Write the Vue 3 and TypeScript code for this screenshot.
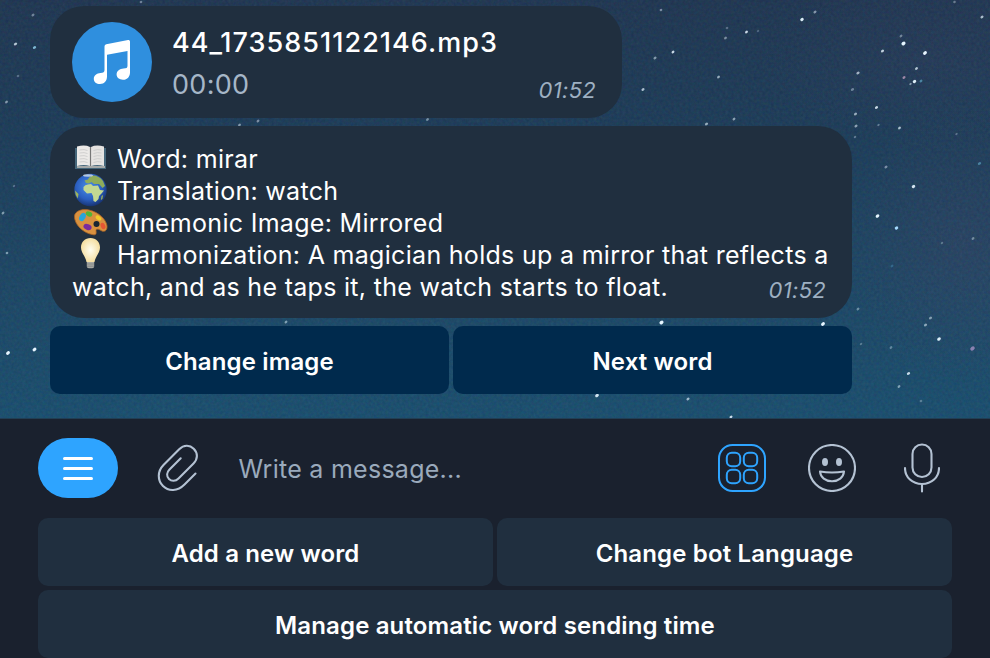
<script setup lang="ts">
interface Star { x: number; y: number; r: number; o: number; c?: string }

const stars: Star[] = [
  { x: 673, y: 52, r: 1.4, o: 0.85 }, { x: 718.5, y: 77, r: 1.4, o: 0.6 }, { x: 746.5, y: 32, r: 1.4, o: 0.85 },
  { x: 725.5, y: 38, r: 1.4, o: 0.45 }, { x: 727, y: 28, r: 1.3, o: 0.3 }, { x: 758, y: 31, r: 1.2, o: 0.25 },
  { x: 802, y: 19.5, r: 1.7, o: 0.95 }, { x: 815, y: 12, r: 1.5, o: 0.5 }, { x: 903.5, y: 43.5, r: 2, o: 1 },
  { x: 901, y: 36, r: 1.4, o: 0.4 }, { x: 925, y: 53, r: 1.9, o: 1 }, { x: 882.5, y: 51, r: 1.5, o: 0.8 },
  { x: 858, y: 73, r: 1.6, o: 0.65 }, { x: 852.5, y: 89.5, r: 1.6, o: 0.4 }, { x: 916.5, y: 68.5, r: 1.4, o: 0.75 },
  { x: 904, y: 77.5, r: 1.5, o: 0.6, c: '#efb9dc' }, { x: 914.5, y: 81.5, r: 1.7, o: 0.95 }, { x: 921, y: 81, r: 1.4, o: 0.5, c: '#76c9ed' },
  { x: 910.5, y: 84, r: 1.2, o: 0.5 }, { x: 876.5, y: 107.5, r: 1.5, o: 0.85 }, { x: 855.5, y: 114, r: 1.5, o: 0.6 },
  { x: 856, y: 126, r: 1.5, o: 0.55 }, { x: 878.5, y: 125, r: 1.2, o: 0.35 }, { x: 899.5, y: 128, r: 1.4, o: 0.7 },
  { x: 855, y: 137, r: 1.2, o: 0.35 }, { x: 886, y: 167, r: 1.5, o: 0.45 }, { x: 913.5, y: 186.5, r: 1.7, o: 0.9 },
  { x: 979.5, y: 163.5, r: 1.6, o: 0.5, c: '#6fc1e4' }, { x: 982, y: 17, r: 1.5, o: 0.7 }, { x: 954.5, y: 2, r: 1.3, o: 0.35 },
  { x: 956.5, y: 134, r: 1.2, o: 0.3 }, { x: 734, y: 119, r: 1.4, o: 0.55 }, { x: 706.5, y: 124, r: 1.5, o: 0.6 },
  { x: 661, y: 10, r: 1.3, o: 0.45 }, { x: 655, y: 58, r: 1.5, o: 0.5 }, { x: 643, y: 89.5, r: 1.5, o: 0.7 },
  { x: 877.5, y: 216, r: 1.8, o: 1 }, { x: 896.5, y: 228, r: 1.7, o: 1, c: '#a5dbff' }, { x: 973, y: 238.5, r: 1.4, o: 0.4 },
  { x: 942, y: 243, r: 1.2, o: 0.3 }, { x: 892, y: 266, r: 1.4, o: 0.3, c: '#55b2e4' }, { x: 858, y: 309, r: 1.4, o: 0.4 },
  { x: 930.5, y: 318, r: 1.5, o: 0.5 }, { x: 925.5, y: 325, r: 1.5, o: 0.55 }, { x: 939, y: 339, r: 1.8, o: 0.95 },
  { x: 972.5, y: 348.5, r: 2.2, o: 0.7, c: '#b798cf' }, { x: 908.5, y: 373.5, r: 1.6, o: 0.85 }, { x: 899, y: 386.5, r: 1.4, o: 0.5 },
  { x: 891, y: 347.5, r: 1.4, o: 0.35 }, { x: 861, y: 344, r: 1.2, o: 0.3 }, { x: 921, y: 401, r: 1.3, o: 0.3 },
  { x: 823, y: 324, r: 1.9, o: 1 }, { x: 661.5, y: 322.5, r: 2, o: 1 }, { x: 597, y: 395.5, r: 1.8, o: 0.9 },
  { x: 688, y: 399, r: 1.5, o: 0.65 }, { x: 731, y: 417, r: 1.4, o: 0.85 }, { x: 8, y: 353, r: 1.9, o: 1 },
  { x: 34.5, y: 349.5, r: 1.9, o: 1 }, { x: 286, y: 322, r: 1.4, o: 0.5 }, { x: 15.5, y: 44, r: 1.6, o: 0.75 },
  { x: 34.5, y: 47.5, r: 1.6, o: 0.75, c: '#9ee0ff' }, { x: 33, y: 15, r: 1.5, o: 0.4 }, { x: 6.5, y: 102, r: 1.4, o: 0.5 },
  { x: 18, y: 76, r: 1.3, o: 0.3 }, { x: 141, y: 2, r: 1.3, o: 0.4 }, { x: 258, y: 121, r: 1.4, o: 0.45 },
  { x: 239.5, y: 125, r: 1.4, o: 0.5 }, { x: 427.5, y: 119.5, r: 1.4, o: 0.45 }, { x: 3, y: 213, r: 1.4, o: 0.5 },
  { x: 7, y: 253, r: 1.3, o: 0.5 }, { x: 14, y: 186, r: 1.2, o: 0.3 },
]
</script>

<template>
  <main class="app">
    <section class="chat">
      <svg class="sky" viewBox="0 0 990 420" aria-hidden="true">
        <defs>
          <filter id="grain" x="0" y="0" width="100%" height="100%" color-interpolation-filters="sRGB">
            <feTurbulence type="fractalNoise" baseFrequency="0.35" numOctaves="2" seed="8" />
            <feColorMatrix values="1 0 0 0 0  0 1 0 0 0  0 0 1 0 0  0 0 0 0 1" />
          </filter>
          <linearGradient id="night" x1="0" y1="0" x2="0" y2="1">
            <stop offset="0" stop-color="#1b3350" />
            <stop offset=".3" stop-color="#183957" />
            <stop offset=".65" stop-color="#184363" />
            <stop offset="1" stop-color="#154c6e" />
          </linearGradient>
          <radialGradient id="violet"><stop stop-color="#3a3f62" stop-opacity=".35" /><stop offset="1" stop-color="#3a3f62" stop-opacity="0" /></radialGradient>
        </defs>
        <rect width="990" height="420" fill="url(#night)" />
        <ellipse cx="965" cy="245" rx="120" ry="140" fill="url(#violet)" />
        <ellipse cx="930" cy="60" rx="170" ry="90" fill="url(#violet)" opacity=".6" />
        <rect width="990" height="420" filter="url(#grain)" opacity=".08" />
        <ellipse
          v-for="(s, i) in stars" :key="i" :cx="s.x" :cy="s.y" :rx="s.r * 1.1" :ry="s.r * 0.85"
          :fill="s.c ?? '#e6f5ff'" :opacity="s.o" :transform="`rotate(-35 ${s.x} ${s.y})`"
        />
      </svg>

      <div class="messages">
        <article class="bubble audio">
          <svg class="note" viewBox="0 0 80 80" aria-hidden="true">
            <circle cx="40" cy="40" r="40" fill="#2f8fde" />
            <path d="M32.500 24.400Q32.500 22.600 34.300 22.200L56 18Q58 17.600 58 19.500V50.500C58 54.500 55.500 57.800 51 57.800C47.200 57.800 44.600 55.700 44.600 52.600C44.600 49 48 46.800 51.500 46.600C54.500 46.500 55.500 45.900 55.500 43.800V28.900L35 32.800V54.500C35 58.800 32.500 62 28 62C24.500 62 21.800 59.800 21.800 56.900C21.800 53.200 25 51.200 28.400 51C31.500 50.800 32.500 50.100 32.500 48Z" fill="#fff" />
          </svg>
          <div class="track">
            <span class="file">44_1735851122146.mp3</span>
            <span class="elapsed">00:00</span>
          </div>
          <time class="time">01:52</time>
        </article>

        <article class="bubble card">
          <p class="line">
            <svg class="emoji" viewBox="0 0 36 32" aria-hidden="true">
              <path d="M2 4h31v21H2z" fill="#46677b" /><path d="M4 22h28v2H4z" fill="#a5a9a9" />
              <path d="M4 2.500Q12 .5 17 3V22Q11 20 4 22z" fill="#eceae8" /><path d="M18 3Q23 .5 31 2.500V22Q24 20 18 22z" fill="#e5e3e1" />
              <path d="M17.500 3v19" stroke="#777" stroke-width="1.200" />
              <path d="M6.500 6q5-1 8 .5M6.500 9q5-1 8 .5M6.500 12q5-1 8 .5M6.500 15q5-1 8 .5M6.500 18q5-1 8 .5M20.500 6.500q4-1.500 8-.5M20.500 9.500q4-1.500 8-.5M20.500 12.500q4-1.500 8-.5M20.500 15.500q4-1.500 8-.5M20.500 18.500q4-1.500 8-.5" fill="none" stroke="#c8c8c8" stroke-width=".8" />
            </svg><span>Word: mirar</span>
          </p>
          <p class="line">
            <svg class="emoji" viewBox="0 0 36 32" aria-hidden="true">
              <defs><radialGradient id="sea" cx=".45" cy=".4" r=".6"><stop stop-color="#4b90e8" /><stop offset=".65" stop-color="#2b5fc0" /><stop offset="1" stop-color="#183575" /></radialGradient></defs>
              <circle cx="17.500" cy="14" r="16.200" fill="url(#sea)" />
              <path d="M10.500 11Q12 8.500 15 8.500L18 8 20 10 25 9.500 27 14 31 14.500 28.500 17.500 26 20 25.500 23 22.500 26 20.500 25 20 20 18.500 17 14 17.500 10.500 14Z" fill="#c3d892" />
              <path d="M13 7L11.500 4.500 15 3.500 16 1.500 20-.5Q26-.5 30 5L32 10 29.500 12 26 8 21 8 18.500 6 16 7.500Z" fill="#8fac5a" />
              <path d="M2 14.500L5.500 18 4.800 22.500Q2 19 2 14.500Z" fill="#9eb45c" /><path d="M28.500 20l1.500-1-.6 4-1.500 1z" fill="#9eb45c" />
              <ellipse cx="15" cy="-.5" rx="5" ry="1.200" fill="#eef3ed" opacity=".7" />
            </svg><span>Translation: watch</span>
          </p>
          <p class="line">
            <svg class="emoji" viewBox="0 0 36 32" aria-hidden="true">
              <path d="M1.500 8C2 3 9 .5 16 2C26 4 33.500 12 34 18C34.500 23 31 24.500 28 22.500C25.500 21 23 20.500 23 22.500C23.500 26.500 23 27.500 19 26.500C10 25 1 16 1.500 8Z" fill="#d8913f" stroke="#a76326" stroke-width=".8" />
              <circle cx="23.500" cy="16" r="3" fill="#182532" />
              <ellipse cx="9.500" cy="9" rx="4.400" ry="2.900" fill="#2aa4d8" transform="rotate(-60 9.500 9)" />
              <ellipse cx="16" cy="6" rx="3.400" ry="2.400" fill="#53b536" transform="rotate(25 16 6)" />
              <ellipse cx="25.500" cy="10" rx="3.300" ry="2" fill="#f0ca2b" transform="rotate(40 25.500 10)" />
              <ellipse cx="30" cy="18" rx="3.300" ry="2.200" fill="#e65634" transform="rotate(65 30 18)" />
              <ellipse cx="14.500" cy="19" rx="4.200" ry="2.800" fill="#7a2a9d" transform="rotate(20 14.500 19)" />
            </svg><span>Mnemonic Image: Mirrored</span>
          </p>
          <p class="line">
            <svg class="emoji" viewBox="0 0 36 32" aria-hidden="true">
              <defs><radialGradient id="glow"><stop stop-color="#fffef0" /><stop offset="1" stop-color="#f5dfa2" /></radialGradient></defs>
              <path d="M17.500-2C12-2 8 2 8 7.500C8 13 12.500 16 13.500 22H21.500C22.500 16 27 13 27 7.500C27 2 23-2 17.500-2Z" fill="url(#glow)" />
              <path d="M13.800 22h7.400v4.500q0 1.800-2 1.800h-3.400q-2 0-2-1.800z" fill="#a8a9a4" /><path d="M14 24h7M14 26.200h7" stroke="#73797b" stroke-width=".7" />
            </svg><span>Harmonization: A magician holds up a mirror that reflects a</span>
          </p>
          <p class="line"><span>watch, and as he taps it, the watch starts to float.</span></p>
          <time class="time">01:52</time>
        </article>

        <div class="inline-keys">
          <button type="button">Change image</button>
          <button type="button">Next word</button>
        </div>
      </div>
    </section>

    <section class="composer">
      <div class="bar">
        <button class="menu" type="button" aria-label="Menu"><i></i><i></i><i></i></button>
        <svg class="clip" viewBox="0 0 44 50" aria-hidden="true">
          <path d="M39.500 30.500L28.500 41.500C21.500 48.500 12.500 48.500 7 43C1.300 37.300 1.300 28.300 7.500 22L23.200 6.300C27.800 1.700 33.700 1.700 37.700 5.700C42 10 42 16 37.500 20.500L22.500 35.500C19.500 38.500 15.500 38.500 13 36C10.400 33.300 10.500 29.500 13.500 26.500L24.700 15.300" />
        </svg>
        <span class="placeholder">Write a message...</span>
        <svg class="grid" viewBox="0 0 48 48" aria-hidden="true">
          <rect x="1" y="1" width="46" height="46" rx="13.500" />
          <rect x="8.800" y="8.800" width="13.400" height="13.400" rx="5" /><rect x="25.800" y="8.800" width="13.400" height="13.400" rx="5" />
          <rect x="8.800" y="25.800" width="13.400" height="13.400" rx="5" /><rect x="25.800" y="25.800" width="13.400" height="13.400" rx="5" />
        </svg>
        <svg class="smile" viewBox="0 0 48 48" aria-hidden="true">
          <circle cx="24" cy="24" r="23" /><ellipse class="eye" cx="17" cy="18" rx="3" ry="4" /><ellipse class="eye" cx="31" cy="18" rx="3" ry="4" />
          <path d="M12 27.500Q24 29.500 36 27.500C35.500 33.500 30.500 37.300 24 37.300S12.500 33.500 12 27.500Z" />
        </svg>
        <svg class="mic" viewBox="0 0 36 50" aria-hidden="true">
          <rect x="8.500" y="1.500" width="19" height="32.500" rx="9.500" /><path d="M1 25C1 34.500 8.500 41 18 41S35 34.500 35 25M18 41V48.500" />
        </svg>
      </div>
      <div class="reply-keys">
        <button type="button">Add a new word</button>
        <button type="button">Change bot Language</button>
        <button class="wide" type="button">Manage automatic word sending time</button>
      </div>
    </section>
  </main>
</template>

<style>
body { margin: 0; overflow: hidden; background: #1a212e; }
</style>

<style scoped>
* { box-sizing: border-box; }
.app { width: 990px; height: 658px; overflow: hidden; font-family: Inter, "Noto Sans", sans-serif; color: #fff; background: #1a212e; }
.chat { position: relative; height: 419px; overflow: hidden; border-bottom: 1px solid #213e54; }
.sky { position: absolute; top: 0; left: 0; width: 990px; height: 420px; }
.messages { position: relative; display: flex; flex-direction: column; align-items: flex-start; gap: 8px; padding: 6px 0 0 50px; }
.bubble { position: relative; background: #202f3f; border-radius: 34px; }
.audio { display: flex; width: 572px; height: 112px; padding: 16px 22px; gap: 20px; }
.note { width: 80px; height: 80px; flex: none; }
.track { display: flex; flex-direction: column; padding-top: 1px; }
.file { font-size: 27px; font-weight: 500; line-height: 40px; letter-spacing: 1.05px; white-space: nowrap; }
.elapsed { margin-top: 2px; font-size: 27px; line-height: 40px; color: #a6b7c8; letter-spacing: .3px; }
.time { position: absolute; right: 26px; bottom: 15px; font-size: 22px; line-height: 26px; font-style: italic; color: #9eb0c2; letter-spacing: .3px; }
.card { width: 802px; height: 192px; padding: 17px 22px 0; }
.line { display: flex; align-items: center; height: 32px; margin: 0; font-size: 25px; line-height: 32px; letter-spacing: .3px; white-space: nowrap; }
.emoji { width: 36px; height: 32px; flex: none; overflow: visible; margin: 2px 8px 0 1px; }
.inline-keys { display: grid; grid-template-columns: 399px 399px; gap: 4px; }
button { display: flex; align-items: center; justify-content: center; border: 0; padding: 3px 0 0; font: 600 24px/30px Inter, sans-serif; letter-spacing: .14px; color: #fff; white-space: nowrap; }
.inline-keys button { height: 68px; border-radius: 10px; background: #002a4d; }
.bar { display: flex; align-items: center; height: 98px; padding: 0 50px 0 38px; }
.menu { width: 80px; height: 60px; border-radius: 30px; flex-direction: column; gap: 7px; padding: 0; background: #2ea4ff; }
.menu i { width: 30px; height: 3px; border-radius: 2px; background: #fff; }
svg { fill: none; }
.clip, .smile, .mic { stroke: #b4c2d3; stroke-width: 2.1; stroke-linecap: round; stroke-linejoin: round; }
.clip { width: 44px; height: 50px; margin-left: 38px; }
.placeholder { margin-left: 38.5px; font-size: 25px; color: #9aaabc; letter-spacing: .27px; white-space: nowrap; padding-top: 1px; }
.grid { width: 48px; height: 48px; margin-left: auto; stroke: #2ea4ff; stroke-width: 2; }
.smile { width: 48px; height: 48px; margin-left: 42px; }
.eye { fill: #b4c2d3; stroke: none; }
.mic { width: 36px; height: 50px; margin-left: 48px; }
.reply-keys { display: grid; grid-template-columns: 455px 455px; gap: 4px; padding: 1px 38px; }
.reply-keys button { height: 68px; border-radius: 10px; background: #202f3f; }
.reply-keys .wide { grid-column: 1 / -1; }
</style>
